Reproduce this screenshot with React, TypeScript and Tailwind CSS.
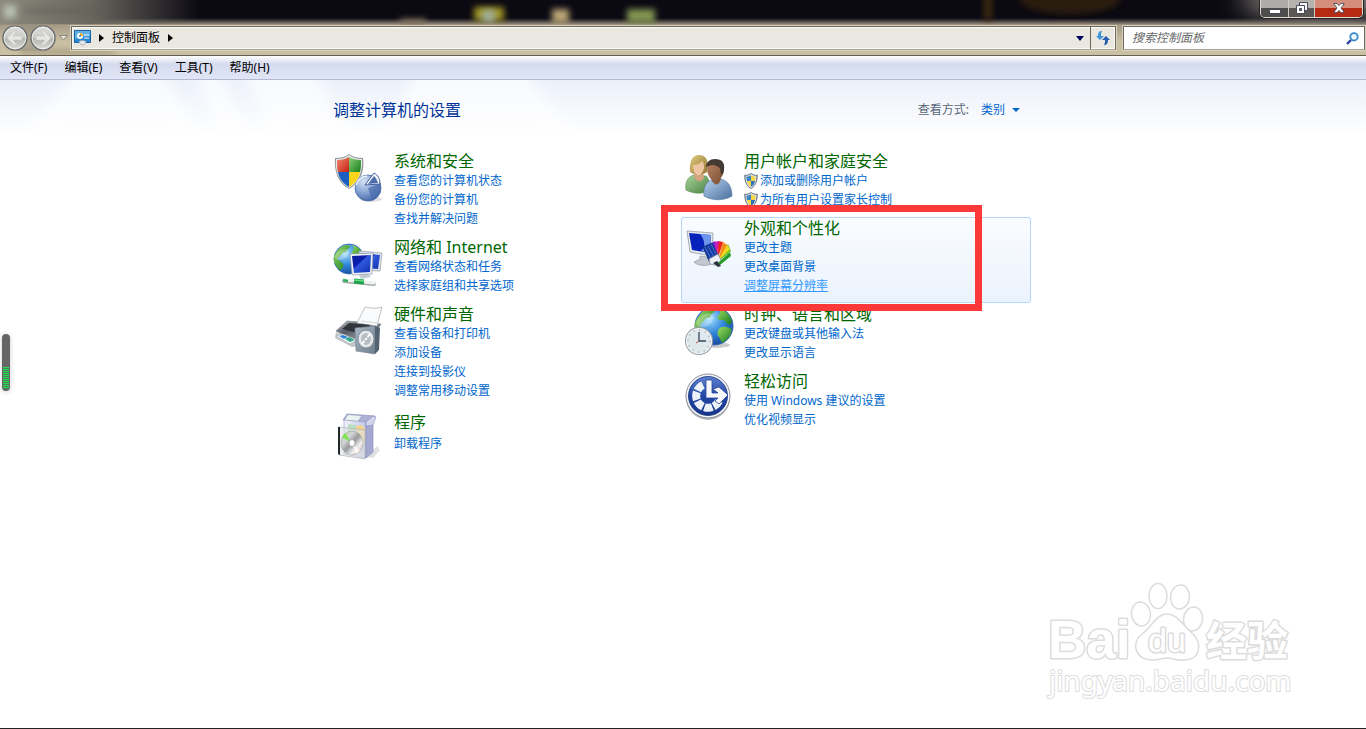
import { ReactNode } from 'react'

interface TaskLink {
  label: string
  shield?: boolean
  hovered?: boolean
}

interface Category {
  title: string
  icon: ReactNode
  links: TaskLink[]
  active?: boolean
  short?: boolean
}

const ShieldShape = () => (
  <>
    <path d="M15 0C11 3 6 4 1 4c-1 13 3 25 14 31C26 29 31 17 29 4 24 4 19 3 15 0Z" fill="#8f9799" />
    <path d="M15 1C11 4 7 5 2 5c-1 12 3 23 13 29C25 28 29 17 28 5 23 5 19 4 15 1Z" fill="#e9eded" />
  </>
)

const SmallShield = () => (
  <svg width="14" height="16" viewBox="0 0 30 36" className="shrink-0" aria-hidden="true">
    <path d="M15 0C11 3 6 4 0 4c-1 14 4 26 15 32C26 30 31 18 30 4 24 4 19 3 15 0Z" fill="#6f7c86" />
    <path d="M15 2C11 5 7 6 3 6c-1 12 3 22 12 28C24 28 28 18 27 6 23 6 19 5 15 2Z" fill="#dfe6ea" />
    <path d="M15 5C12 7 9 8 5 8c0 4 0 7 1 10h9Z" fill="#3f84c4" />
    <path d="M15 5c3 2 6 3 10 3 0 4 0 7-1 10h-9Z" fill="#f7d648" />
    <path d="M6 18h9v13c-5-3-8-7-9-13Z" fill="#f7d648" />
    <path d="M24 18h-9v13c5-3 8-7 9-13Z" fill="#2f70b4" />
  </svg>
)

const IconFrame = ({ children }: { children: ReactNode }) => (
  <svg width="48" height="48" viewBox="0 0 48 48" className="mt-1 shrink-0 overflow-visible" aria-hidden="true">
    {children}
  </svg>
)

const SecurityIcon = () => (
  <IconFrame>
    <defs>
      <radialGradient id="pie" cx="0.35" cy="0.25" r="0.85">
        <stop offset="0" stopColor="#d6e2f4" />
        <stop offset="0.5" stopColor="#86a4d4" />
        <stop offset="1" stopColor="#3a5c9e" />
      </radialGradient>
      <linearGradient id="shieldRed" x1="0" y1="0" x2="1" y2="1">
        <stop offset="0" stopColor="#f08a70" />
        <stop offset="1" stopColor="#c81e10" />
      </linearGradient>
      <linearGradient id="shieldGreen" x1="0" y1="0" x2="1" y2="1">
        <stop offset="0" stopColor="#8fce7c" />
        <stop offset="1" stopColor="#158018" />
      </linearGradient>
    </defs>
    <ellipse cx="37" cy="45" rx="11" ry="3" fill="#000" opacity="0.12" />
    <ShieldShape />
    <path d="M15 3C12 5 8 6 3 6c0 5 0 9 1 12h11Z" fill="url(#shieldRed)" />
    <path d="M15 3c3 2 7 3 12 3 0 5 0 9-1 12H15Z" fill="url(#shieldGreen)" />
    <path d="M4 18h11v15C8 29 5 24 4 18Z" fill="#1d5fc0" />
    <path d="M26 18H15v15c7-4 10-9 11-15Z" fill="#fbd51c" />
    <circle cx="34" cy="34" r="13" fill="url(#pie)" stroke="#4969a5" strokeWidth="0.8" />
    <path d="M22 31a13 13 0 0 1 11-9" fill="none" stroke="#edf3fb" strokeWidth="1.5" />
    <path d="m34 34 12-4c3 8-2 14-8 16Z" fill="#4b6cae" opacity="0.7" />
    <path d="m31 31 9-12c4 2 6 6 6 11Z" fill="#f6f9fd" stroke="#324d91" strokeWidth="0.9" />
    <path d="m34 30 6-8c2 2 3 4 4 7Z" fill="#4c6dac" />
  </IconFrame>
)

const Globe = ({ cx, cy, r }: { cx: number; cy: number; r: number }) => (
  <g transform={`translate(${cx} ${cy}) scale(${r / 16})`}>
    <circle r="16" fill="url(#sea)" stroke="#2a62ac" strokeWidth="0.8" />
    <path d="M-13-8c3-5 8-7 12-7 3 1 2 3 0 4s-1 4-4 4-3 3-5 4-2 4 0 5 5 3 4 6-4 5-5 3-5-6-5-10c-1-3 1-6 3-9Z" fill="url(#land)" />
    <path d="M3-15c6 1 10 5 12 10 0 4-2 5-4 3s-2-3-5-3-4-2-2-4 1-4-1-6Z" fill="url(#land)" />
    <path d="M6 1c4-1 7 0 9 2-1 6-4 9-8 11-2-1-1-3-3-5s-1-7 2-8Z" fill="url(#land)" />
    <ellipse cx="-4" cy="-8" rx="8" ry="5" fill="#fff" opacity="0.28" transform="rotate(-32)" />
  </g>
)

const NetworkIcon = () => (
  <IconFrame>
    <defs>
      <radialGradient id="sea" cx="0.38" cy="0.3" r="0.8">
        <stop offset="0" stopColor="#a6e1fb" />
        <stop offset="0.5" stopColor="#2f86dc" />
        <stop offset="1" stopColor="#123f94" />
      </radialGradient>
      <linearGradient id="land" x1="0" y1="0" x2="1" y2="1">
        <stop offset="0" stopColor="#9bdc62" />
        <stop offset="1" stopColor="#157a22" />
      </linearGradient>
      <linearGradient id="screen" x1="0" y1="0" x2="1" y2="1">
        <stop offset="0" stopColor="#0a1f9e" />
        <stop offset="0.4" stopColor="#0a1cae" />
        <stop offset="0.45" stopColor="#2f58dc" />
        <stop offset="1" stopColor="#1232b4" />
      </linearGradient>
    </defs>
    <Globe cx={15} cy={19} r={15} />
    <path d="M25 11 48 13 46 31 26 30Z" fill="#dfe6ed" stroke="#8c98a8" strokeWidth="0.7" />
    <path d="M27 13 46 15 44 29 28 28Z" fill="url(#screen)" />
    <path d="m25 35 9-1 3 3-10 2Z" fill="#c5cdd4" />
    <path d="M16 14 39 13 38 34 18 35Z" fill="#edf1f5" stroke="#8c98a8" strokeWidth="0.7" />
    <path d="M18 16 37 15 36 32 20 33Z" fill="url(#screen)" />
    <path d="m10 41 30 3" stroke="#a3aaa8" strokeWidth="4" strokeLinecap="round" />
    <path d="m10 40 30 3" stroke="#f0f4f2" strokeWidth="3" strokeLinecap="round" />
    <path d="m20 41 10 1" stroke="#1ba24a" strokeWidth="5" />
    <path d="m20 40 10 1" stroke="#66db86" strokeWidth="1.5" />
    <path d="m9 40 5 1" stroke="#2eae58" strokeWidth="2.5" />
  </IconFrame>
)

const HardwareIcon = () => (
  <IconFrame>
    <defs>
      <linearGradient id="printer" x1="0" y1="0" x2="1" y2="1">
        <stop offset="0" stopColor="#c6cbd0" />
        <stop offset="0.4" stopColor="#565c64" />
        <stop offset="1" stopColor="#b9bfc6" />
      </linearGradient>
      <linearGradient id="speaker" x1="0" y1="0" x2="1" y2="1">
        <stop offset="0" stopColor="#a9b7c4" />
        <stop offset="1" stopColor="#6d7d8c" />
      </linearGradient>
    </defs>
    <path d="m2 25 16 8 26-6v8L18 40 1 31Z" fill="#c2c7cc" />
    <path d="M2 24 13 14 47 17 41 27 18 32Z" fill="url(#printer)" stroke="#777f87" strokeWidth="0.6" />
    <path d="m23 16 8-16c5 1 12 2 17 0l-5 19Z" fill="#fafbfc" stroke="#adb2b7" strokeWidth="0.8" />
    <path d="m27 14 16 2" stroke="#d4d7da" />
    <path d="m8 22 7-6 21 2-3 4-14 3Z" fill="#31363d" />
    <path d="m2 29 7-2 14 6-7 4Z" fill="#f5f7f8" stroke="#9aa0a6" strokeWidth="0.5" />
    <path d="m5 29 4-1 5 2-4 2Z" fill="#2f87d4" />
    <path d="m11 32 4-2 6 3-5 2Z" fill="#37a78c" />
    <path d="M21 21 41 19 41 47 22 44Z" fill="url(#speaker)" stroke="#74828f" strokeWidth="0.6" />
    <path d="m41 19 5 2-1 22-4 4Z" fill="#536270" />
    <ellipse cx="32" cy="32" rx="8" ry="9" fill="#e6e9ec" stroke="#7f8c98" />
    <ellipse cx="32" cy="32" rx="5" ry="6" fill="#b8c0c7" />
    <path d="m28 37 8-10" stroke="#fff" strokeWidth="2" />
    <circle cx="32" cy="32" r="2" fill="#f7f8f9" stroke="#7c8893" strokeWidth="0.6" />
  </IconFrame>
)

const ProgramsIcon = () => (
  <IconFrame>
    <defs>
      <linearGradient id="box" x1="0" y1="0" x2="1" y2="0">
        <stop offset="0" stopColor="#f1f2fb" />
        <stop offset="1" stopColor="#c3c7e6" />
      </linearGradient>
      <linearGradient id="disc" x1="0" y1="0" x2="1" y2="1">
        <stop offset="0" stopColor="#a5df80" />
        <stop offset="0.3" stopColor="#d4d6d7" />
        <stop offset="0.5" stopColor="#97999b" />
        <stop offset="0.7" stopColor="#eeeeee" />
        <stop offset="1" stopColor="#d9b3a6" />
      </linearGradient>
    </defs>
    <path d="m32 45 11-11 3 4-7 8Z" fill="#000" opacity="0.12" />
    <path d="M9 8 13 2 41 4 38 10Z" fill="#aeb1d4" stroke="#8b8fbc" strokeWidth="0.7" />
    <path d="m14 3 13 1-3 5-13-1Z" fill="#eaf4ef" />
    <path d="M10 8 32 10v36l-22-4Z" fill="url(#box)" stroke="#9598c0" strokeWidth="0.6" />
    <path d="m32 10 7-3v33l-7 6Z" fill="#a5a8d0" stroke="#8386b3" strokeWidth="0.6" />
    <path d="m32 10 7-6 3 1-3 8-7 1Z" fill="#d3d5ef" stroke="#8b8fbc" strokeWidth="0.6" />
    <path d="m19 15 8-2 4 3v15l-8 3Z" fill="#f3d48e" />
    <path d="m14 12 8 1v8l-8-1Z" fill="#b8e0c1" />
    <path d="M5 15 31 18 31 47 5 43Z" fill="#dde1e2" fillOpacity="0.6" stroke="#a9afb2" strokeWidth="0.7" />
    <path d="M4 15h2v28l-2-1Z" fill="#222628" />
    <ellipse cx="18" cy="31" rx="11" ry="12" fill="url(#disc)" stroke="#96999b" strokeWidth="0.5" />
    <path d="M18 31 8 25l3-4Z" fill="#6ee735" opacity="0.8" />
    <path d="m18 31 8 8-4 3Z" fill="#fff" opacity="0.7" />
    <ellipse cx="18" cy="31" rx="3" ry="3.5" fill="#fff" stroke="#999" strokeWidth="0.8" />
  </IconFrame>
)

const UsersIcon = () => (
  <IconFrame>
    <defs>
      <linearGradient id="greenShirt" x1="0" y1="0" x2="1" y2="1">
        <stop offset="0" stopColor="#a9d59b" />
        <stop offset="1" stopColor="#498142" />
      </linearGradient>
      <linearGradient id="blueShirt" x1="0" y1="0" x2="1" y2="1">
        <stop offset="0" stopColor="#b7d2ee" />
        <stop offset="1" stopColor="#496f9f" />
      </linearGradient>
      <linearGradient id="hair" x1="0" y1="0" x2="1" y2="1">
        <stop offset="0" stopColor="#dfcb83" />
        <stop offset="1" stopColor="#94762f" />
      </linearGradient>
      <linearGradient id="skin" x1="0" y1="0" x2="1" y2="1">
        <stop offset="0" stopColor="#b98561" />
        <stop offset="1" stopColor="#7d5138" />
      </linearGradient>
    </defs>
    <path d="M2 36c-1-7 1-13 8-15l12 1c3 2 4 9 3 15-7 3-16 3-23-1Z" fill="url(#greenShirt)" stroke="#55874b" strokeWidth="0.6" />
    <path d="m11 19-1 4c3 5 7 6 10 1l-1-5Z" fill="#d5a47e" />
    <path d="M6 18C5 8 8 1 15 1c8 0 10 7 8 17-4 3-12 4-17 0Z" fill="url(#hair)" />
    <path d="M9 11c4 0 7-1 9-4 3 3 3 10-2 14-5 1-7-4-7-10Z" fill="#edc7a4" />
    <path d="M20 42c-1-8 2-14 7-16l10-1c8 2 11 9 11 17-8 5-20 5-28 0Z" fill="url(#blueShirt)" stroke="#54779e" strokeWidth="0.6" />
    <path d="m27 23 1 4c3 5 7 5 9-2l-1-5Z" fill="#865c42" />
    <path d="M23 14c0-6 4-8 8-8s9 2 9 9c0 6-4 12-9 12-4 0-8-6-8-13Z" fill="url(#skin)" />
    <path d="M22 13c0-5 4-8 9-8 7 0 10 4 9 10 0 3-1 5-3 6l-1-7c-3-2-5-3-7-3-3 0-5 1-7 2Z" fill="#453a33" />
  </IconFrame>
)

const AppearanceIcon = () => (
  <IconFrame>
    <path d="m16 35 7 1 4 7c-5 3-15 1-17-2l6-3Z" fill="#c1c8ce" stroke="#8d969e" strokeWidth="0.6" />
    <path d="M3 10 29 12 28 35 6 31Z" fill="#e2e8ed" stroke="#939ea9" strokeWidth="0.8" />
    <path d="M5 12 27 14 26 32 8 29Z" fill="#0722ba" />
    <path d="m16 13 11 1-1 18-9-2c5-4 4-11-1-17Z" fill="#6f94ec" />
    <path d="m34 41 13-11-3-7Z" fill="#71bf20" />
    <path d="m34 42 12-11 1 4-11 9Z" fill="#259e28" />
    <path d="m34 40 8-17 4 5Z" fill="#f4d921" />
    <path d="m34 40 5-19 4 3Z" fill="#f58b19" />
    <path d="m33 40 1-20 5 1Z" fill="#ed251b" />
    <path d="m32 40-2-19 5-1Z" fill="#d21bb5" />
    <path d="m32 40-6-17 5-3Z" fill="#7b28d0" />
    <path d="m19 26 9-4 6 12-9 6Z" fill="#163ba4" stroke="#0c256f" strokeWidth="0.7" />
    <path d="m21 26 6 12m-3-13 6 11m-3-13 5 10" stroke="#5c83dc" strokeWidth="0.7" />
    <path d="m25 38 9-5 3 6-5 5-6-1Z" fill="#edf1f5" stroke="#788392" strokeWidth="0.7" />
    <path d="m29 42 4-2 4 5-3 1Z" fill="#283342" />
  </IconFrame>
)

const ClockIcon = () => (
  <IconFrame>
    <ellipse cx="32" cy="38" rx="14" ry="3" fill="#000" opacity="0.2" />
    <Globe cx={30} cy={19} r={19} />
    <circle cx="15" cy="34" r="14" fill="#949da5" />
    <circle cx="15" cy="34" r="13" fill="#f9fafb" />
    <circle cx="15" cy="34" r="12" fill="#dfe8ed" />
    <circle cx="15" cy="34" r="11" fill="none" stroke="#8997a2" strokeWidth="1.5" strokeDasharray="0.8 4.96" />
    <path d="M15 25v9h7" fill="none" stroke="#354a5a" strokeWidth="1.3" />
    <path d="m15 34-3 2" stroke="#b22c28" strokeWidth="0.8" />
  </IconFrame>
)

const EaseIcon = () => (
  <IconFrame>
    <defs>
      <linearGradient id="ease" x1="0" y1="0" x2="0" y2="1">
        <stop offset="0" stopColor="#5f80cf" />
        <stop offset="0.5" stopColor="#2347a6" />
        <stop offset="1" stopColor="#16348a" />
      </linearGradient>
    </defs>
    <circle cx="24" cy="24" r="22" fill="#8c9298" opacity="0.6" />
    <circle cx="24" cy="22" r="22" fill="#f2f4f7" stroke="#707982" strokeWidth="0.8" />
    <circle cx="24" cy="22" r="19.5" fill="url(#ease)" stroke="#142e79" strokeWidth="0.8" />
    <path d="M19 11A12 12 0 1 0 35 27" fill="none" stroke="#edf1f8" strokeWidth="8" strokeDasharray="8 1.4" />
    <path d="M22 6h6v13h6l-5-4 6-2 9 8-9 9-4-3 3-3H22Z" fill="#f6f8fb" stroke="#2b4999" strokeWidth="0.8" />
  </IconFrame>
)

const leftColumn: Category[] = [
  {
    title: '系统和安全',
    icon: <SecurityIcon />,
    links: [{ label: '查看您的计算机状态' }, { label: '备份您的计算机' }, { label: '查找并解决问题' }],
  },
  {
    title: '网络和 Internet',
    icon: <NetworkIcon />,
    links: [{ label: '查看网络状态和任务' }, { label: '选择家庭组和共享选项' }],
  },
  {
    title: '硬件和声音',
    icon: <HardwareIcon />,
    links: [
      { label: '查看设备和打印机' },
      { label: '添加设备' },
      { label: '连接到投影仪' },
      { label: '调整常用移动设置' },
    ],
  },
  { title: '程序', icon: <ProgramsIcon />, links: [{ label: '卸载程序' }], short: true },
]

const rightColumn: Category[] = [
  {
    title: '用户帐户和家庭安全',
    icon: <UsersIcon />,
    links: [
      { label: '添加或删除用户帐户', shield: true },
      { label: '为所有用户设置家长控制', shield: true },
    ],
  },
  {
    title: '外观和个性化',
    icon: <AppearanceIcon />,
    links: [{ label: '更改主题' }, { label: '更改桌面背景' }, { label: '调整屏幕分辨率', hovered: true }],
    active: true,
  },
  {
    title: '时钟、语言和区域',
    icon: <ClockIcon />,
    links: [{ label: '更改键盘或其他输入法' }, { label: '更改显示语言' }],
  },
  {
    title: '轻松访问',
    icon: <EaseIcon />,
    links: [{ label: '使用 Windows 建议的设置' }, { label: '优化视频显示' }],
  },
]

const menuItems = ['文件(F)', '编辑(E)', '查看(V)', '工具(T)', '帮助(H)']

const CategoryCard = ({ title, icon, links, active, short }: Category) => (
  <section
    className={`relative flex gap-3 rounded-[3px] pl-[3px] ${
      active
        ? 'bg-linear-to-b from-[#fafcff] to-[#ebf3fd] shadow-[inset_0_0_0_1px_#b8d6fb]'
        : ''
    }`}
  >
    {icon}
    <div className={`pb-2 ${short ? 'pt-1' : 'pt-px'}`}>
      <h2 className="text-base leading-5 text-[#006600]">
        <a href="#">{title}</a>
      </h2>
      <ul className={short ? 'pt-0.5' : ''}>
        {links.map((link) => (
          <li key={link.label} className="flex h-[19px] items-center gap-0.5">
            {link.shield && <SmallShield />}
            <a
              href="#"
              className={`text-xs leading-[19px] ${
                link.hovered ? 'text-[#3399ff] underline' : 'text-[#0066cc]'
              }`}
            >
              {link.label}
            </a>
          </li>
        ))}
      </ul>
    </div>
    {active && (
      <div className="pointer-events-none absolute -top-3 right-[49px] -bottom-2 -left-5 z-10 border-7 border-[#fd3838]" />
    )}
  </section>
)

// Desktop shapes that show blurred through the window glass
const GlassBackdrop = () => (
  <svg className="absolute inset-0 h-full w-full" aria-hidden="true">
    <defs>
      <filter id="soft" x="-100%" y="-150%" width="300%" height="400%">
        <feGaussianBlur stdDeviation="3" />
      </filter>
      <filter id="softer" x="-100%" y="-100%" width="300%" height="300%">
        <feGaussianBlur stdDeviation="12" />
      </filter>
      <linearGradient id="glowLeft" x1="0" y1="0" x2="1" y2="0">
        <stop offset="0" stopColor="#8b887c" />
        <stop offset="0.45" stopColor="#6b6860" />
        <stop offset="1" stopColor="#6b6860" stopOpacity="0" />
      </linearGradient>
    </defs>
    <rect x="0" y="0" width="200" height="24" fill="url(#glowLeft)" />
    <rect x="4" y="5" width="12" height="13" fill="#b7c2b3" filter="url(#soft)" />
    <rect x="25" y="8" width="85" height="6" fill="#5d5b54" opacity="0.5" filter="url(#soft)" />
    <rect x="474" y="7" width="30" height="14" fill="#9c9024" filter="url(#soft)" />
    <rect x="482" y="10" width="13" height="12" fill="#9eae9b" filter="url(#soft)" />
    <rect x="552" y="9" width="17" height="14" fill="#b9a574" filter="url(#soft)" />
    <rect x="627" y="9" width="28" height="14" fill="#829451" filter="url(#soft)" />
    <rect x="400" y="19" width="26" height="6" fill="#85755f" filter="url(#soft)" />
    <rect x="984" y="-6" width="8" height="26" fill="#3d2a0f" filter="url(#soft)" />
    <ellipse cx="1070" cy="0" rx="50" ry="14" fill="#2c1b10" filter="url(#soft)" />
    <ellipse cx="1320" cy="0" rx="80" ry="18" fill="#88847e" filter="url(#softer)" />
    <rect x="20" y="50" width="94" height="4" fill="#827a64" opacity="0.6" filter="url(#soft)" />
  </svg>
)

const RoundArrow = ({ flip }: { flip?: boolean }) => (
  <svg width="26" height="26" viewBox="0 0 26 26" aria-hidden="true">
    <defs>
      <linearGradient id="roundGlass" x1="0" y1="0" x2="0" y2="1">
        <stop offset="0" stopColor="#dedfdb" />
        <stop offset="0.48" stopColor="#cbccc7" />
        <stop offset="0.52" stopColor="#b2b3ae" />
        <stop offset="1" stopColor="#e0e0db" />
      </linearGradient>
    </defs>
    <circle cx="13" cy="13" r="12" fill="url(#roundGlass)" stroke="#62676b" strokeWidth="1.2" />
    <circle cx="13" cy="13" r="10.8" fill="none" stroke="#f3f3ef" strokeOpacity="0.8" />
    <g transform={flip ? 'matrix(-1 0 0 1 26 0)' : undefined}>
      <path d="m5 13 7-7h3l-4 5h9v4h-9l4 5h-3Z" fill="#e6e7e3" stroke="#c3c4bf" strokeWidth="0.6" />
    </g>
  </svg>
)

const TriangleRight = () => (
  <svg width="5" height="8" viewBox="0 0 5 8" aria-hidden="true">
    <path d="M0 0 5 4 0 8Z" fill="#000" />
  </svg>
)

const WindowButtons = () => (
  <div className="absolute top-0 right-[3px] flex h-[18px] overflow-hidden rounded-b-[5px] border border-t-0 border-[#dedad4] shadow-[0_0_0_1px_#26221f]">
    <button
      aria-label="最小化"
      className="flex w-7 justify-center border-r border-[#d0cdc8] bg-linear-to-b from-[#aeaca9] from-50% to-[#4f4d4b] to-50% pt-[9px]"
    >
      <svg width="12" height="5" viewBox="0 0 12 5">
        <path d="M.5.5h11v4H.5Z" fill="#fff" stroke="#454b58" />
      </svg>
    </button>
    <button
      aria-label="还原"
      className="flex w-[26px] justify-center border-r border-[#d0cdc8] bg-linear-to-b from-[#b5b2ae] from-50% to-[#5a5755] to-50% pt-0.5"
    >
      <svg width="12" height="12" viewBox="0 0 12 12">
        <path d="M3.5.5h8v8h-8Z" fill="#f5f5f5" stroke="#454b58" />
        <path d="M.5 3.500h8v8h-8Z" fill="#fff" stroke="#454b58" />
        <path d="M3.500 6.500h2v2h-2Z" fill="#74777e" stroke="#454b58" />
      </svg>
    </button>
    <button
      aria-label="关闭"
      className="flex w-[47px] justify-center bg-linear-to-b from-[#d58d7c] from-50% to-[#b62a13] to-50% pt-[3px]"
    >
      <svg width="12" height="10" viewBox="0 0 12 10">
        <path d="M.7.5h3.4L6 2.600 7.900.5h3.4L8 5l3.3 4.500H7.900L6 7.400 4.100 9.500H.7L4 5Z" fill="#fff" stroke="#4a4c5c" strokeWidth="0.9" />
      </svg>
    </button>
  </div>
)

const AddressBar = () => (
  <div className="relative flex items-center pr-px pl-0.5">
    <div className="flex gap-0.5 rounded-full bg-[#87847a]/40">
      <button aria-label="后退">
        <RoundArrow />
      </button>
      <button aria-label="前进">
        <RoundArrow flip />
      </button>
    </div>
    <button aria-label="最近的页面" className="flex w-[15px] justify-center">
      <svg width="9" height="6" viewBox="0 0 9 6">
        <path d="M.5.5h8l-4 4.500Z" fill="#e6e3da" stroke="#8e8a80" />
      </svg>
    </button>
    <div className="flex h-6 flex-1 border border-[#6a675f] border-b-[#a8a394] bg-[#e9e7e0] shadow-[inset_0_0_0_1px_#fafaf7,0_0_0_1px_#d8d2bd]">
      <div className="flex flex-1 items-center gap-2 pl-0.5 text-xs">
        <svg width="17" height="16" viewBox="0 0 17 16" aria-hidden="true">
          <path d="M.5.5h16v12H.5Z" fill="#2788ce" stroke="#1a66a5" />
          <path d="M1 1h15v5c-5 0-10 1-15 3Z" fill="#75c3ef" opacity="0.7" />
          <circle cx="6" cy="6" r="3" fill="#fff" />
          <path d="M6 3a3 3 0 0 1 3 3H6Z" fill="#f5a623" />
          <circle cx="6" cy="6" r="1" fill="#2788ce" />
          <path d="M10 5h5M10 8h5" stroke="#fff" />
          <path d="M5 12c0-2 7-2 7 0l-2 3H7Z" fill="#e1e5e8" stroke="#9ba3a9" strokeWidth="0.6" />
        </svg>
        <TriangleRight />
        <span>控制面板</span>
        <TriangleRight />
      </div>
      <button aria-label="以前的位置" className="flex w-5 items-center justify-center">
        <svg width="8" height="5" viewBox="0 0 8 5">
          <path d="M0 0h8L4 5Z" fill="#00005c" />
        </svg>
      </button>
      <button aria-label="刷新" className="flex w-[25px] items-center justify-center border-l border-[#6a675f]">
        <svg width="14" height="14" viewBox="0 0 14 14">
          <path d="M6 0C3 0 2 2 2 5H0l4 4 4-4H5c0-2 0-3 1-5Z" fill="#3a95d6" />
          <path d="M8 14c3 0 4-2 4-5h2l-4-4-4 4h3c0 2 0 3-1 5Z" fill="#245eae" />
        </svg>
      </button>
    </div>
    <label className="ml-[7px] flex h-6 w-[242px] items-center border border-[#6a675f] border-b-[#a8a394] bg-white pr-[5px] pl-2 shadow-[0_0_0_1px_#d8d2bd]">
      <input
        type="search"
        aria-label="搜索控制面板"
        placeholder="搜索控制面板"
        className="min-w-0 flex-1 bg-transparent text-xs italic outline-none placeholder:text-[#666]"
      />
      <svg width="13" height="13" viewBox="0 0 13 13" aria-hidden="true">
        <path d="m1 12 4-4" stroke="#28449b" strokeWidth="2.400" />
        <circle cx="8" cy="4.800" r="3.700" fill="#f4fbff" stroke="#3487ca" strokeWidth="1.800" />
      </svg>
    </label>
  </div>
)

const Watermark = () => (
  <div className="pointer-events-none absolute right-[70px] bottom-[26px]">
    <svg width="250" height="122" viewBox="0 0 250 122" role="img" aria-label="Baidu 经验">
      <g fill="#fff" stroke="#dcdcdc" strokeWidth="1.5" strokeLinejoin="round">
        <ellipse cx="95" cy="34" rx="9.500" ry="12" transform="rotate(-8 95 34)" />
        <ellipse cx="112" cy="16" rx="9" ry="12.500" />
        <ellipse cx="134" cy="17" rx="9.500" ry="12" transform="rotate(8 134 17)" />
        <ellipse cx="147" cy="39" rx="9.500" ry="12" transform="rotate(8 147 39)" />
        <path d="M121 34c-11 0-15 13-25 20-11 8-8 26 11 26 6 0 9-2 14-2s10 3 17 2c17 0 18-17 9-26-10-8-15-20-26-20Z" />
        <g style={{ paintOrder: 'stroke' }} strokeWidth="3">
          <text x="2" y="78" fontSize="53" fontWeight="bold" fontFamily="Liberation Sans, sans-serif">
            Bai
          </text>
          <text x="102" y="72" fontSize="34" fontFamily="Liberation Sans, sans-serif">
            du
          </text>
          <text x="160" y="76" fontSize="41" fontWeight="bold" fontFamily="Noto Sans CJK SC, sans-serif">
            经验
          </text>
        </g>
        <text x="3" y="111" fontSize="28" strokeWidth="2" style={{ paintOrder: 'stroke' }} fontFamily="Noto Sans, sans-serif">
          jingyan.baidu.com
        </text>
      </g>
    </svg>
  </div>
)

const App = () => {
  return (
    <div className="relative flex min-h-screen flex-col overflow-hidden border-b border-[#222] bg-white font-['Noto_Sans','Noto_Sans_CJK_SC',sans-serif] text-black">
      {/* Title bar */}
      <header className="relative border-b border-[#666052] bg-linear-to-b from-[#0b0912] from-[18px] via-[#a69b86] via-[25px] to-[#c9bfa2] to-[42px] pt-[25px] pb-1">
        <GlassBackdrop />
        <WindowButtons />
        <AddressBar />
      </header>

      {/* Menu bar */}
      <nav className="flex h-6 items-center gap-[17px] border-b border-[#b3b9d0] bg-linear-to-b from-white from-0% via-[#d5dbee] via-35% to-[#e1e6f6] pl-2.5">
        {menuItems.map((item) => (
          <button key={item} className="text-xs leading-4">
            {item}
          </button>
        ))}
      </nav>

      <main className="relative flex-1 bg-linear-to-b from-[#ebf0fa] from-0% to-white to-[56px]">
        <svg className="absolute top-0 left-0 h-14 w-full" aria-hidden="true">
          <defs>
            <filter id="beam" x="-10%" y="-50%" width="120%" height="200%">
              <feGaussianBlur stdDeviation="7" />
            </filter>
          </defs>
          <g fill="#fff" opacity="0.65" filter="url(#beam)">
            <path d="M80-20h80l45 90H20Z" />
            <path d="M190-20h25l40 90h-30Z" />
            <path d="M235-20h75l45 90h-75Z" />
            <path d="M420-20h100l60 90H380Z" />
          </g>
        </svg>
        <div className="relative mx-auto max-w-[704px]">
          <div className="flex items-center justify-between pt-5 pr-[15px] pl-0.5">
            <h1 className="text-base leading-5 text-[#003399]">调整计算机的设置</h1>
            <div className="flex items-center text-xs leading-5">
              <label htmlFor="view-by" className="mr-3 text-[#5a6779]">
                查看方式:
              </label>
              <select id="view-by" className="mr-1.5 appearance-none bg-transparent text-[#0066cc]">
                <option>类别</option>
              </select>
              <svg width="8" height="4" viewBox="0 0 8 4" aria-hidden="true">
                <path d="M0 0h8L4 4Z" fill="#0066cc" />
              </svg>
            </div>
          </div>

          <div className="grid grid-cols-[350px_350px] pt-[30px]">
            <div>
              {leftColumn.map((category) => (
                <CategoryCard key={category.title} {...category} />
              ))}
            </div>
            <div>
              {rightColumn.map((category) => (
                <CategoryCard key={category.title} {...category} />
              ))}
            </div>
          </div>
        </div>

        <Watermark />
      </main>

      {/* Volume level at the screen edge */}
      <div className="absolute top-[334px] left-0.5 flex h-[57px] w-2 flex-col justify-end rounded-full bg-[#666] px-px pb-0.5 shadow-[0_1px_5px_rgba(0,0,0,0.2)]">
        <div className="h-[22px] bg-[repeating-linear-gradient(#22e052_0_1px,#4f7a58_1px_2px)]" />
      </div>
    </div>
  )
}

export default App
